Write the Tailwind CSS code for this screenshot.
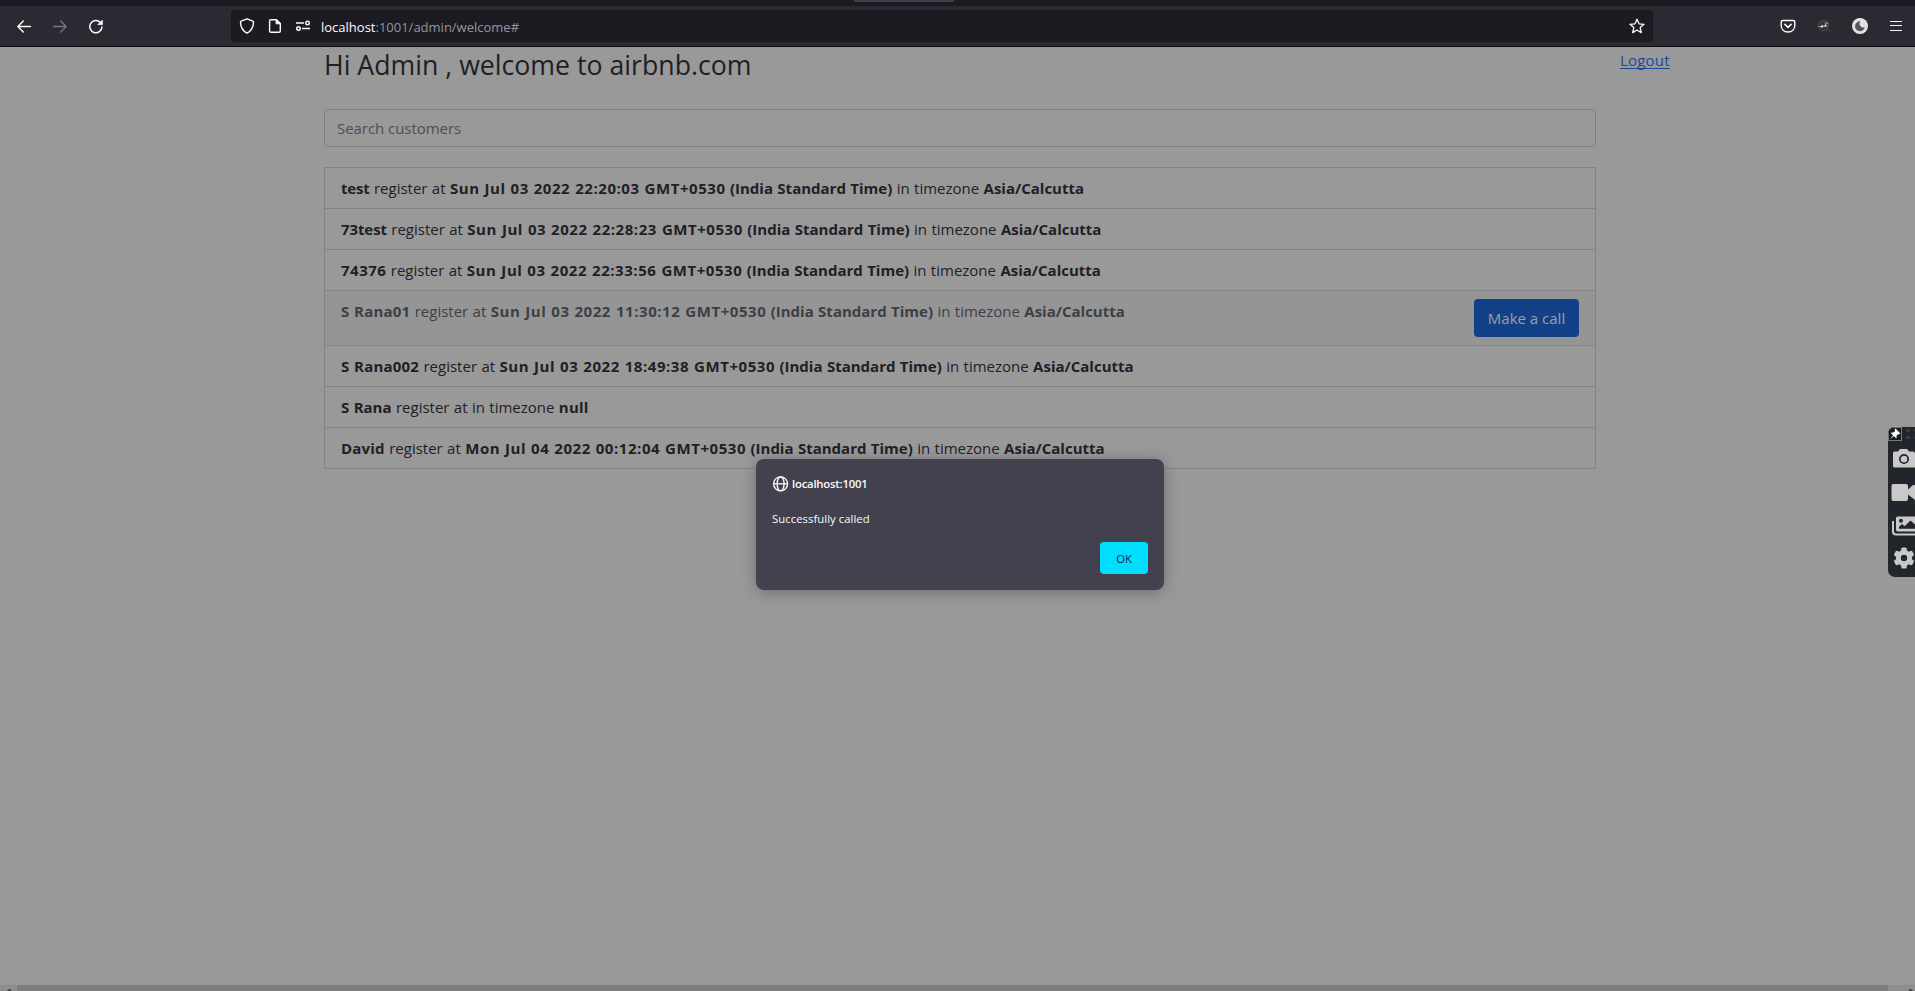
<!DOCTYPE html>
<html lang="en">
<head>
<meta charset="utf-8">
<title>Admin</title>
<script src="https://cdn.jsdelivr.net/npm/@tailwindcss/browser@4"></script>
</head>
<body class="relative flex h-[991px] w-[1915px] flex-col overflow-hidden bg-[#99999a] font-['Open_Sans',sans-serif] text-[15px] leading-6 text-[#1f2025]">

<!-- browser chrome -->
<div class="h-[6px] shrink-0 bg-[#1c1b22] pl-[854px]"><div class="h-[2px] w-[100px] rounded-b-sm bg-[#42414d]"></div></div>
<header class="flex h-[41px] shrink-0 items-start border-b border-[#0c0c0e] bg-[#2b2a33] pt-1 text-[#fbfbfe]">
  <div class="flex h-8 w-[231px] shrink-0 items-center gap-5 pl-4">
    <svg class="size-4" viewBox="0 0 16 16" fill="none" stroke="currentColor" stroke-width="1.4" stroke-linecap="round" stroke-linejoin="round"><path d="M14.5 8.5H1.8M7.3 3L1.8 8.5L7.3 14"/></svg>
    <svg class="size-4 text-[#77767d]" viewBox="0 0 16 16" fill="none" stroke="currentColor" stroke-width="1.4" stroke-linecap="round" stroke-linejoin="round"><path d="M1.5 8.5H14.2M8.7 3L14.2 8.5L8.7 14"/></svg>
    <svg class="size-4" viewBox="0 0 16 16" fill="none" stroke="currentColor" stroke-width="1.5" stroke-linecap="round" stroke-linejoin="round"><path d="M12.3 4.4A6.1 6.1 0 1 0 14 9"/><path d="M14.4 2.4v4.2h-4.2z" fill="currentColor" stroke-width=".8"/></svg>
  </div>
  <div class="flex h-8 w-[1422px] shrink-0 items-center rounded-[4px] bg-[#1c1b22] pr-2 pl-2">
    <svg class="size-4" viewBox="0 0 16 16" fill="none" stroke="currentColor" stroke-width="1.4" stroke-linejoin="round"><path d="M8 .8L13.8 3.1Q14.6 3.4 14.5 4.4C14.3 9.5 12 13.2 8 15.2C4 13.2 1.7 9.5 1.5 4.4Q1.4 3.4 2.2 3.1Z"/></svg>
    <svg class="ml-3 size-4" viewBox="0 0 16 16" fill="none" stroke="currentColor" stroke-width="1.4" stroke-linejoin="round"><path d="M9.5 1.7H3.9Q2.6 1.7 2.6 3V13Q2.6 14.3 3.9 14.3H12Q13.3 14.3 13.3 13V5.4Z"/><path d="M9 1.5V5.8H13.5Z" fill="currentColor" stroke-width=".8"/></svg>
    <svg class="ml-3 size-4" viewBox="0 0 16 16" fill="none" stroke="currentColor" stroke-width="1.4"><path d="M1 5H9M7 10.5H15"/><circle cx="12.5" cy="5" r="1.8"/><circle cx="3.5" cy="10.5" r="1.8"/></svg>
    <p class="ml-[10px] pt-[2px] text-[13px] text-[#95949a]"><span class="text-[#fbfbfe]">localhost</span>:1001/admin/welcome#</p>
    <svg class="ml-auto size-4" viewBox="0 0 16 16" fill="none" stroke="currentColor" stroke-width="1.3" stroke-linejoin="round"><path d="M8 1.2L10 5.8L15 6.3L11.2 9.6L12.3 14.6L8 12L3.7 14.6L4.8 9.6L1 6.3L6 5.8Z"/></svg>
  </div>
  <div class="flex h-8 grow items-center justify-end pr-[11px]">
    <svg class="size-4" viewBox="0 0 16 16" fill="none" stroke="currentColor" stroke-width="1.4" stroke-linecap="round" stroke-linejoin="round"><path d="M2.8 2.5H13.2Q14.8 2.5 14.8 4V7.5C14.8 11.5 12 14 8 14S1.2 11.5 1.2 7.5V4Q1.2 2.5 2.8 2.5Z"/><path d="M4.8 6.3L8 9.4L11.2 6.3" stroke-width="1.6"/></svg>
    <svg class="ml-[20px] size-4" viewBox="0 0 16 16" fill="none"><circle cx="7.3" cy="7.6" r="5.2" fill="#34343a" stroke="#505052"/><path d="M12 11.5L15 14" stroke="#3a3a3e" stroke-width="2"/><path d="M2.5 8.7L6 8.2L9.5 8V5H12.5" stroke="#a8a8a8" stroke-width="1"/><circle cx="6" cy="8.5" r="1.2" fill="#d8d8d8"/><circle cx="9.6" cy="7.8" r="1.2" fill="#c8c8c8"/></svg>
    <svg class="ml-[20px] size-4" viewBox="0 0 16 16"><circle cx="8" cy="8" r="8" fill="#e2e2e2"/><path d="M8.3 3.2A5 5 0 1 0 12.9 9.3A4 4 0 0 1 8.3 3.2Z" fill="#55555a"/></svg>
    <svg class="ml-[20px] size-4" viewBox="0 0 16 16" stroke="currentColor" stroke-width="1.2" stroke-linecap="round"><path d="M2.5 3.5H13.5M2.5 7.5H13.5M2.5 12.5H13.5"/></svg>
  </div>
</header>

<!-- page -->
<main class="flex grow items-start pl-[324px]">
  <section class="w-[1272px]">
    <h1 class="h-[62px] text-[26.7px] leading-[35px]">Hi Admin , welcome to airbnb.com</h1>
    <div class="flex h-[38px] items-center rounded-[4px] border border-[#7d7d83] px-3 pb-px text-[#4b4f56] tracking-[-0.05px]">Search customers</div>
    <ul class="mt-5 border border-b-0 border-[#838385] [&>li]:flex [&>li]:border-b [&>li]:border-[#838385] [&>li]:px-4 [&>li]:py-2 [&_p]:[word-spacing:0.5px] [&_b]:tracking-[0.2px] [&_i]:font-bold [&_i]:not-italic [&_i]:tracking-[0.55px]">
      <li><p><b class="!tracking-[-0.2px]">test</b> register at <i>Sun Jul 03 2022 22:20:03 GMT+0530</i> <strong>(India Standard Time)</strong> in timezone <strong>Asia/Calcutta</strong></p></li>
      <li><p><b class="!tracking-[-0.1px]">73test</b> register at <i>Sun Jul 03 2022 22:28:23 GMT+0530</i> <strong>(India Standard Time)</strong> in timezone <strong>Asia/Calcutta</strong></p></li>
      <li><p><b class="!tracking-[0.5px]">74376</b> register at <i>Sun Jul 03 2022 22:33:56 GMT+0530</i> <strong>(India Standard Time)</strong> in timezone <strong>Asia/Calcutta</strong></p></li>
      <li class="h-[55px] justify-between bg-[#959596] text-[#3c3f45]"><p><b>S Rana01</b> register at <i>Sun Jul 03 2022 11:30:12 GMT+0530</i> <strong>(India Standard Time)</strong> in timezone <strong>Asia/Calcutta</strong></p><button class="flex h-[38px] w-[105px] items-center justify-center rounded-[4px] bg-[#124187] text-[#9d9fa4]">Make a call</button></li>
      <li><p><b>S Rana002</b> register at <i>Sun Jul 03 2022 18:49:38 GMT+0530</i> <strong>(India Standard Time)</strong> in timezone <strong>Asia/Calcutta</strong></p></li>
      <li><p><b class="!tracking-[0px]">S Rana</b> register at in timezone <b>null</b></p></li>
      <li><p><b>David</b> register at <i>Mon Jul 04 2022 00:12:04 GMT+0530</i> <strong>(India Standard Time)</strong> in timezone <strong>Asia/Calcutta</strong></p></li>
    </ul>
  </section>
  <a class="ml-6 pt-px tracking-[0.2px] text-[#184a9b] underline underline-offset-2 [text-decoration-skip-ink:none]">Logout</a>
</main>

<!-- horizontal scrollbar -->
<div class="flex h-[6px] shrink-0 items-end bg-[#8e8e8f]">
  <svg class="ml-[7px] h-[2px] w-[4px]" viewBox="0 0 4 2"><path d="M0 2L2 0H4V2Z" fill="#444"/></svg>
  <div class="ml-[6px] h-[6px] w-[1871px] bg-[#7d7d7e]"></div>
  <svg class="ml-[21px] h-[2px] w-[4px]" viewBox="0 0 4 2"><path d="M0 0H2L4 2H0Z" fill="#444"/></svg>
</div>

<!-- alert dialog -->
<div class="absolute top-[459px] left-[756px] flex h-[131px] w-[408px] flex-col rounded-[8px] bg-[#42414d] px-4 pt-4 pb-4 text-[11.3px] leading-4 text-[#fbfbfe] shadow-[0_2px_14px_rgba(58,57,68,0.45)]">
  <div class="flex items-start gap-1 font-semibold tracking-[-0.2px]">
    <svg class="size-[17px]" viewBox="0 0 17 17" fill="none" stroke="currentColor" stroke-width="1.3"><circle cx="8.6" cy="8.8" r="7"/><ellipse cx="8.6" cy="8.8" rx="3.5" ry="7"/><path d="M1.6 8.8H15.6" stroke-width="1.3"/></svg>
    <span class="-ml-px pt-px">localhost:1001</span>
  </div>
  <p class="mt-[19px] tracking-[0.05px]">Successfully called</p>
  <button class="mt-auto ml-auto flex h-8 w-12 items-center justify-center rounded-[4px] bg-[#00ddff] pt-px text-[#2b2a33]">OK</button>
</div>

<!-- capture toolbar docked to the right edge -->
<div class="absolute top-[427px] right-0 flex h-[150px] w-[27px] flex-col items-start overflow-hidden rounded-l-[7px] bg-[#22252b] text-[#c9c9c9]">
  <div class="flex h-[14px] w-full bg-[radial-gradient(circle,#3a3d42_1.5px,transparent_2px)] bg-[length:8px_7px]">
    <svg class="size-[14px] shrink-0 border border-[#777] bg-[#1b1d22]" viewBox="0 0 12 12" fill="#fff"><path d="M6.5 .6L11.4 5.5L9.8 6.4L8.9 6.2L7.6 7.8L7.4 10.4L4.8 8L1.2 11L4 7.2L1.6 4.8L4.3 4.5L6 3.2L5.8 1.6Z"/></svg>
  </div>
  <svg class="mt-[7px] ml-[4px] h-5 w-[23px]" viewBox="0 0 23 20"><path d="M2.5 3.5H6L8 1H15L17 3.5H21Q23 3.5 23 5.5V19.5H2.5Q1 19.5 1 18V5Q1 3.5 2.5 3.5Z" fill="currentColor"/><circle cx="12" cy="11" r="4.2" fill="none" stroke="#22252b" stroke-width="1.7"/></svg>
  <svg class="mt-[15px] ml-[3px] h-[18px] w-6" viewBox="0 0 24 18" fill="currentColor"><path d="M2 1H15Q17 1 17 3V6.5L22 2H24V17L17 11.5V16Q17 18 15 18H2Q.5 18 .5 16V3Q.5 1 2 1Z"/></svg>
  <svg class="mt-[15px] ml-[3px] h-5 w-6" viewBox="0 0 24 20"><path d="M2 5V15.5Q2 18.5 5 18.5H24" fill="none" stroke="currentColor" stroke-width="2"/><rect x="5" y=".5" width="24" height="15" rx="1.8" fill="currentColor"/><g fill="#22252b"><circle cx="10" cy="4.8" r="2"/><path d="M8 12.8V10.8L11 8L13.5 10.2L19.5 4.5L24 8.5V12.8Z"/></g></svg>
  <svg class="mt-[11px] ml-[5px] h-[22px] w-[22px]" viewBox="0 0 22 22"><g fill="currentColor"><circle cx="11" cy="11" r="8"/><rect x="8.2" y=".5" width="5.6" height="21" rx="1.5"/><rect x="8.2" y=".5" width="5.6" height="21" rx="1.5" transform="rotate(60 11 11)"/><rect x="8.2" y=".5" width="5.6" height="21" rx="1.5" transform="rotate(120 11 11)"/></g><circle cx="11" cy="11" r="3.2" fill="#22252b"/></svg>
</div>
</body>
</html>
